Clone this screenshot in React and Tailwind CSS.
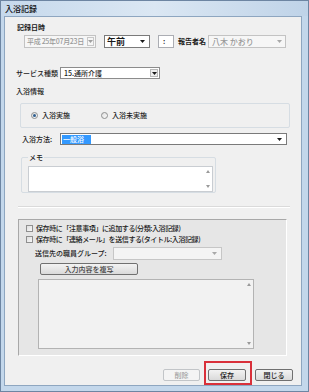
import React from 'react';

const Arrow = ({ color = '#1a1a1a' }) => (
  <svg width="5" height="3" viewBox="0 0 5 3" className="shrink-0">
    <path d="M0 0h5L2.5 3z" fill={color} />
  </svg>
);

const ScrollArrows = ({ up = true, down = true }) => (
  <div className="w-[8px] h-full flex flex-col justify-between items-center py-[3px]">
    {up ? (
      <svg width="4" height="3" viewBox="0 0 4 3"><path d="M0 3h4L2 0z" fill="#9a9a9a" /></svg>
    ) : <span />}
    {down ? (
      <svg width="4" height="3" viewBox="0 0 4 3"><path d="M0 0h4L2 3z" fill="#9a9a9a" /></svg>
    ) : <span />}
  </div>
);

const Radio = ({ checked }) => (
  <div className="w-[7px] h-[7px] rounded-full border border-[#8e8f8f] bg-gradient-to-br from-[#e0e0e0] to-[#fafafa] flex items-center justify-center">
    {checked && <div className="w-[3px] h-[3px] rounded-full bg-[#2f5f8f]" />}
  </div>
);

const Check = () => (
  <div className="w-[7px] h-[7px] border border-[#8f8f8f] bg-gradient-to-br from-[#dedede] to-[#f8f8f8] shrink-0" />
);

const Button = ({ children, disabled, className = '' }) => (
  <div
    className={
      'h-[12px] rounded-[2px] flex items-center justify-center ' +
      (disabled
        ? 'border border-[#c2c5c8] bg-[#f4f4f4] text-[#a3a3a3] '
        : 'border border-[#707070] bg-gradient-to-b from-[#f3f3f3] to-[#dadada] text-[#1a1a1a] ') +
      className
    }
  >
    {children}
  </div>
);

export default function App() {
  return (
    <div className="w-[309px] h-[392px] bg-[#c3d7eb] border border-[#6d85a2] flex flex-col font-['Noto_Sans_CJK_JP','Noto_Sans',sans-serif] font-medium text-[7px] leading-[9px] text-[#1a1a1a] overflow-hidden">
      {/* title bar */}
      <div className="h-[15px] shrink-0 flex items-center pl-[4px] text-[8px] text-[#111] bg-gradient-to-r from-[#c6d9ec] via-[#dbe7f3] to-[#bfd3e8]">
        入浴記録
      </div>

      {/* client area */}
      <div className="flex-1 ml-[3px] mr-[6px] mb-[5px] border border-[#8ea6c0] bg-[#f0f0f0] flex flex-col pl-[12px] pt-[6px]">
        <div className="h-[9px] font-semibold">記録日時</div>

        {/* date row */}
        <div className="mt-[3px] h-[13px] flex items-center">
          <div className="ml-[7px] w-[72px] h-[13px] border border-[#c3c3c3] bg-[#f6f6f6] text-[#9a9a9a] flex items-center justify-between pl-[2px] pr-[1px]">
            <span className="tracking-[-0.3px]">平成 25年07月23日</span>
            <div className="w-[7px] h-[9px] border border-[#c8c8c8] flex items-center justify-center">
              <Arrow color="#a0a0a0" />
            </div>
          </div>
          <div className="ml-[8px] w-[46px] h-[13px] border border-[#7a7a7a] bg-white flex items-center justify-between pl-[2px] pr-[4px] text-[9px] font-bold">
            <span>午前</span>
            <Arrow />
          </div>
          <div className="ml-[8px] w-[16px] h-[13px] border border-[#abadb3] bg-white pl-[4px] flex items-center font-bold">:</div>
          <div className="ml-[4px] w-[30px] font-semibold">報告者名</div>
          <div className="w-[78px] h-[13px] border border-[#c3c3c3] bg-[#f6f6f6] text-[#9a9a9a] flex items-center justify-between pl-[3px] pr-[3px] text-[8px]">
            <span>八木 かおり</span>
            <Arrow color="#a8a8a8" />
          </div>
        </div>

        {/* service row */}
        <div className="mt-[19px] h-[12px] flex items-center">
          <div className="-ml-[1px] w-[44px]">サービス種類</div>
          <div className="w-[100px] h-[12px] border border-[#8c8c8c] bg-white flex items-center justify-between pl-[3px] pr-[1px]">
            <span>15.通所介護</span>
            <div className="w-[8px] h-[8px] border border-[#b8b8b8] bg-[#eeeeee] flex items-center justify-center">
              <Arrow />
            </div>
          </div>
        </div>

        <div className="mt-[8px] -ml-[1px] h-[9px]">入浴情報</div>

        {/* radio group */}
        <div className="mt-[7px] ml-[3px] w-[270px] h-[25px] border border-[#d6dde3] rounded-[2px] flex items-center">
          <div className="ml-[10px] w-[70px] flex items-center gap-[4px]">
            <Radio checked />
            <span>入浴実施</span>
          </div>
          <div className="flex items-center gap-[4px]">
            <Radio />
            <span>入浴未実施</span>
          </div>
        </div>

        {/* bath method */}
        <div className="mt-[5px] h-[12px] flex items-center">
          <div className="ml-[5px] w-[38px]">入浴方法:</div>
          <div className="w-[227px] h-[12px] border border-[#7a7a7a] bg-white flex items-center justify-between pl-[1px] pr-[4px]">
            <span className="bg-[#3399ff] text-white px-[1px] w-[29px] h-[9px]">一般浴</span>
            <Arrow />
          </div>
        </div>

        {/* memo group */}
        <div className="mt-[12px] ml-[4px] w-[195px] border border-[#d6dde3] rounded-[2px] pl-[6px]">
          <div className="-mt-[5px] w-fit bg-[#f0f0f0] px-[1px] h-[9px]">メモ</div>
          <div className="mt-[4px] w-[185px] h-[26px] border border-[#c9cdd2] bg-white flex justify-end">
            <ScrollArrows />
          </div>
        </div>

        {/* separator */}
        <div className="mt-[13px] ml-[1px] w-[272px] h-[1px] bg-[#dadada]" />
        <div className="ml-[1px] w-[272px] h-[1px] bg-white" />

        {/* bottom panel */}
        <div className="mt-[11px] ml-[1px] w-[269px] h-[137px] bg-[#e6e6e6] border border-[#a8a8a8] border-r-white border-b-white pl-[7px] pt-[4px]">
          <div className="h-[9px] flex items-center gap-[3px] tracking-[-0.4px]">
            <Check />
            <span>保存時に「注意事項」に追加する(分類:入浴記録)</span>
          </div>
          <div className="mt-[2px] h-[9px] flex items-center gap-[3px] tracking-[-0.4px]">
            <Check />
            <span>保存時に「連絡メール」を送信する(タイトル:入浴記録)</span>
          </div>
          <div className="mt-[3px] h-[13px] flex items-center">
            <div className="ml-[9px] w-[78px]">送信先の職員グループ:</div>
            <div className="w-[109px] h-[13px] border border-[#c6c6c6] bg-[#f4f4f4] flex items-center justify-end pr-[4px]">
              <Arrow color="#a8a8a8" />
            </div>
          </div>
          <Button className="mt-[3px] ml-[14px] w-[98px] text-[#444]">入力内容を複写</Button>
          <div className="mt-[4px] ml-[12px] w-[216px] h-[70px] border border-[#b3b3b3] bg-[#f2f2f2] flex justify-end">
            <ScrollArrows />
          </div>
        </div>

        {/* buttons */}
        <div className="mt-[5px] ml-[146px] flex items-start">
          <Button disabled className="mt-[8px] w-[37px]">削除</Button>
          <div className="ml-[4px] w-[48px] h-[24px] border-2 border-[#d9303a] pt-[6px] pl-[2px]">
            <Button className="w-[38px]">保存</Button>
          </div>
          <Button className="mt-[8px] ml-[3px] w-[38px]">閉じる</Button>
        </div>
      </div>
    </div>
  );
}
